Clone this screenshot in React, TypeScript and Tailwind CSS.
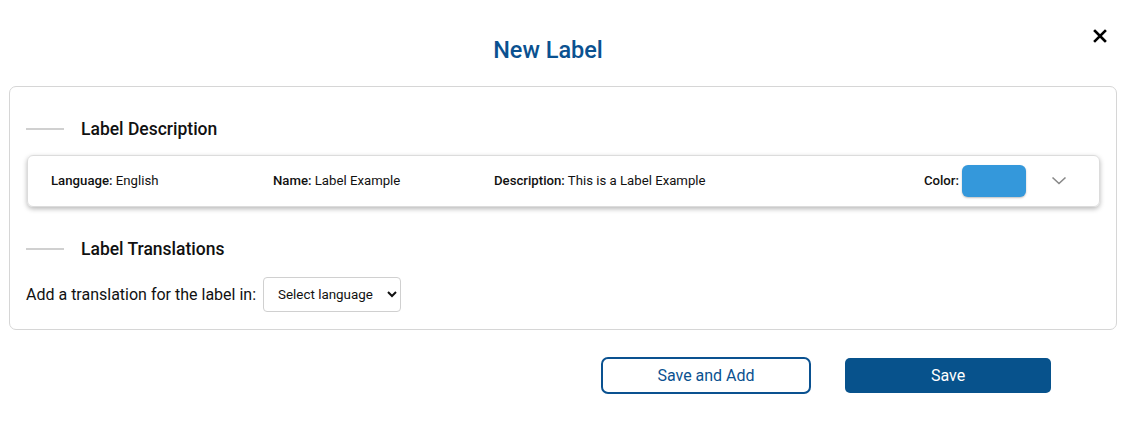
import React from "react";

const Heading = ({ children }: { children: React.ReactNode }) => (
  <div className="flex items-center h-[24px]">
    <div className="w-[38px] h-[2px] bg-[#d0d0d0] ml-[16px]" />
    <div className="ml-[17px] text-[17.5px] font-medium text-[#111]">{children}</div>
  </div>
);

export default function App() {
  return (
    <div className="w-[1135px] h-[432px] bg-white" style={{ fontFamily: "Roboto, 'Liberation Sans', sans-serif" }}>
      <div className="flex items-start pt-[35px] h-[86px]">
        <div className="w-[1096px] flex justify-center">
          <h1 className="text-[23.5px] font-medium text-[#0a5190] leading-[30px]">New Label</h1>
        </div>
        <svg width="14" height="14" viewBox="0 0 14 14" className="mt-[-6px] ml-[-3px]">
          <path d="M2 2 L12 12 M12 2 L2 12" stroke="#000" strokeWidth="2.6" strokeLinecap="square" />
        </svg>
      </div>
      <div className="ml-[9px] w-[1108px] h-[244px] border border-[#d6d6d6] rounded-[7px] pt-[30px]">
        <Heading>Label Description</Heading>
        <div className="ml-[17px] w-[1073px] h-[52px] mt-[14px] rounded-[6px] border border-[#dcdcdc] shadow-[0_2px_5px_rgba(0,0,0,0.28)] flex items-center text-[13.2px] text-[#111]">
          <div className="ml-[23px] w-[222px]"><span className="font-medium">Language:</span> English</div>
          <div className="w-[221px]"><span className="font-medium">Name:</span> Label Example</div>
          <div className="flex-1"><span className="font-medium">Description:</span> This is a Label Example</div>
          <div className="flex items-center">
            <span className="font-medium mr-[3px]">Color:</span>
            <div className="w-[64px] h-[32px] rounded-[6px] bg-[#3498db] shadow-[0_1px_2px_rgba(0,0,0,0.25)]" />
          </div>
          <svg width="16" height="10" viewBox="0 0 16 10" className="ml-[25px] mr-[32px]">
            <path d="M1.5 1.5 L8 7.5 L14.5 1.5" stroke="#888" strokeWidth="1.6" fill="none" />
          </svg>
        </div>
        <div className="mt-[30px]">
          <Heading>Label Translations</Heading>
        </div>
        <div className="flex items-center mt-[16px] ml-[16px]">
          <span className="text-[16px] text-[#111]">Add a translation for the label in:</span>
          <select className="ml-[7px] w-[138px] h-[35px] border border-[#d0d0d0] rounded-[4px] text-[13.4px] text-[#111] pl-[10px] bg-white" defaultValue="">
            <option value="">Select language</option>
            <option value="fr">French</option>
          </select>
        </div>
      </div>
      <div className="flex mt-[27px]">
        <button className="ml-[601px] w-[210px] h-[37px] border-2 border-[#0a5190] rounded-[7px] text-[16px] text-[#0a5190] bg-white">Save and Add</button>
        <button className="ml-[34px] w-[206px] h-[35px] mt-[1px] rounded-[5px] text-[16px] text-white bg-[#07528c]">Save</button>
      </div>
    </div>
  );
}
